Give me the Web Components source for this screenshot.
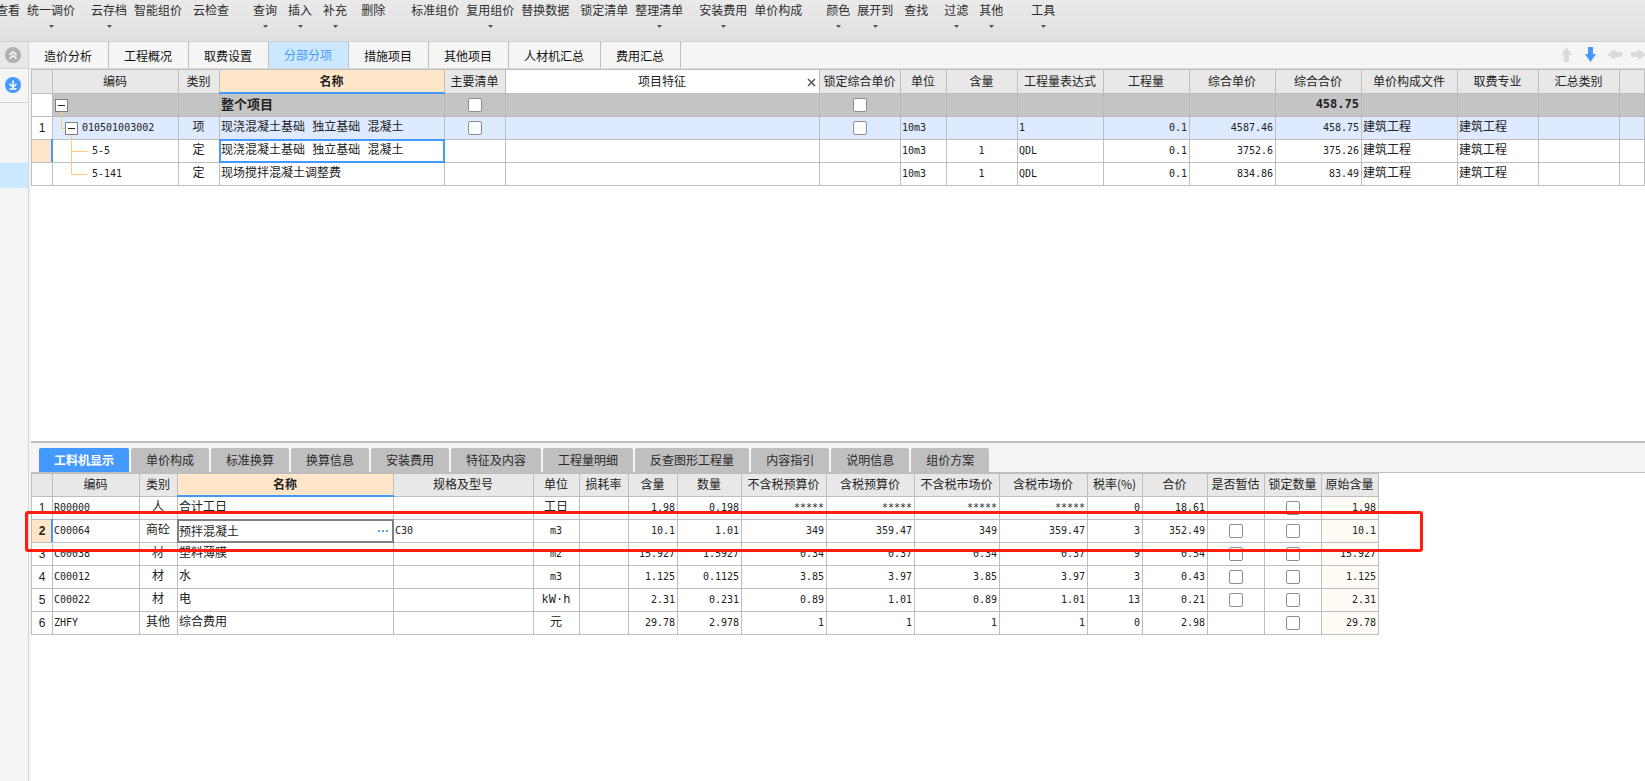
<!DOCTYPE html>
<html lang="zh-CN">
<head>
<meta charset="utf-8">
<title>分部分项 - 计价编辑</title>
<style>
  html, body { margin: 0; height: 100%; }
  body {
    overflow: hidden;
    font: 12px/16px "Noto Sans CJK SC", sans-serif;
    color: #222;
    background: #fff;
    --line: #bebebe;
    --bar: #f5f5f5;
    --head: #e8e8e8;
    --accent: #4499ff;
    --warm: #ffe6c8;
    --pale: #cce8ff;
  }
</style>
</head>
<body>
<pricing-app></pricing-app>

<script>
const make = (name, html, setup) => {
  const template = document.createElement('template');
  template.innerHTML = html;
  customElements.define(name, class extends HTMLElement {
    connectedCallback() {
      if (this.shadowRoot) return;
      const root = this.attachShadow({ mode: 'open' });
      root.append(template.content.cloneNode(true));
      if (setup) setup(this, root);
    }
  });
};

/* One command of the ribbon; "menu" adds the drop-down mark. */
make('tool-command', `
  <style>
    :host { display: block; flex: none; margin-right: var(--after, 7px); }
    button { display: flex; flex-direction: column; align-items: center; gap: 7px; height: 32px;
      padding: 2px 0 0; border: 0; background: none; font: inherit; color: #2e2e2e; white-space: nowrap; }
    svg { display: none; width: 5px; height: 3px; fill: #555; }
    :host([menu]) svg { display: block; }
  </style>
  <button type="button"><slot></slot><svg viewBox="0 0 5 3" aria-hidden="true"><path d="M0 0h5L2.5 3z"/></svg></button>`);

make('tool-ribbon', `
  <style>
    :host { display: block; height: 41px; overflow: hidden; border-bottom: 1px solid #d0d0d0;
      background: linear-gradient(#eaeaea, #e0e0e0); }
    div { display: flex; margin-left: -4px; }
  </style>
  <div role="toolbar" aria-label="功能区"><slot></slot></div>`);

make('side-rail', `
  <style>
    :host { display: flex; flex-direction: column; width: 28px; flex: none; border-right: 1px solid #d5d5d5; background: var(--bar); }
    button { display: grid; place-items: center; width: 100%; padding: 0 2px 0 0; border: 0; background: none; box-sizing: border-box; }
    .up { height: 27px; background: var(--head); border-bottom: 1px solid #d5d5d5; }
    .down { height: 34px; padding-bottom: 1px; border-bottom: 1px solid #d5d5d5; }
    .mark { height: 25px; margin-top: 60px; background: var(--pale); }
    svg { width: 16px; height: 16px; }
    path { fill: none; stroke: #fff; stroke-width: 1.5; }
  </style>
  <button class="up" type="button" aria-label="收起"><svg viewBox="0 0 16 16"><circle cx="8" cy="8" r="8" fill="#b0b0b0"/><path d="M4.500 8 8 4.700 11.500 8M4.500 11.800 8 8.500 11.500 11.800"/></svg></button>
  <button class="down" type="button" aria-label="下载"><svg viewBox="0 0 16 16"><circle cx="8" cy="8" r="8" fill="#4499ff"/><path d="M8 3.500V10M4.500 6.800 8 10.200 11.500 6.800M4.500 12h7"/></svg></button>
  <div class="mark"></div>`);

make('page-tab', `
  <style>
    :host { display: block; flex: none; border-right: 1px solid var(--line); }
    button { display: block; height: 26px; padding: 2px 16px 0 15px; border: 0; background: none; font: inherit; color: #111; white-space: nowrap; }
    :host([current]) button { background: var(--pale); color: var(--accent); padding-top: 0; }
  </style>
  <button type="button" role="tab"><slot></slot></button>`);

make('page-tabs', `
  <style>
    :host { display: flex; height: 26px; border-bottom: 1px solid #d8d8d8; background: var(--bar); overflow: hidden; }
    .tabs { display: flex; flex: 1; }
    .moves { display: flex; align-items: center; gap: 9px; margin-right: -1px; height: 24px; }
    .moves button { display: block; padding: 0; border: 0; background: none; fill: #dadada; }
    .moves .on { fill: var(--accent); }
    svg { display: block; width: 15px; height: 15px; }
  </style>
  <div class="tabs" role="tablist"><slot></slot></div>
  <div class="moves">
    <button type="button" aria-label="上移"><svg viewBox="0 0 15 15"><path d="M7.500 0 13 8H10v7H5V8H2z"/></svg></button>
    <button type="button" class="on" aria-label="下移"><svg viewBox="0 0 15 15"><path d="M7.500 15 13 7H10V0H5v7H2z"/></svg></button>
    <button type="button" aria-label="左移"><svg viewBox="0 0 15 15"><path d="M0 7.500 8 2v3h7v5H8v3z"/></svg></button>
    <button type="button" aria-label="右移"><svg viewBox="0 0 15 15"><path d="M15 7.500 7 2v3H0v5h7v3z"/></svg></button>
  </div>`);

make('detail-tab', `
  <style>
    :host { display: block; flex: none; }
    button { display: block; height: 24px; padding: 0 15px; border: 0; border-radius: 2px 2px 0 0; background: #bfbfbf; font: inherit; color: #2a2a2a; white-space: nowrap; }
    :host([current]) button { background: var(--accent); color: #fff; font-weight: 700; }
  </style>
  <button type="button" role="tab"><slot></slot></button>`);

make('detail-tabs', `
  <style>
    :host { display: flex; gap: 2px; height: 24px; padding: 5px 0 0 8px; border-top: 2px solid var(--line); border-bottom: 1px solid var(--line); background: var(--bar); }
  </style>
  <slot></slot>`);

make('tick-box', `
  <style>
    :host { display: block; height: 14px; }
    input { appearance: none; display: block; box-sizing: border-box; width: 14px; height: 14px; margin: 0 auto; border: 1px solid #8e8e8e; border-radius: 2px; background: #fff; }
  </style>
  <input type="checkbox">`, (host, root) => {
    root.querySelector('input').setAttribute('aria-label', host.getAttribute('label') || '');
  });

/* Outline cell: connector lines, an optional collapse button, then the code. */
make('tree-node', `
  <style>
    :host { display: flex; align-items: center; position: relative; height: 22px; }
    svg { position: absolute; left: 0; top: 0; width: 40px; height: 23px; fill: none; stroke: #ffc87c; }
    button { position: relative; width: 13px; height: 13px; padding: 0; border: 1px solid #808080; background: #fff; flex: none; }
    button::before { content: ""; display: block; width: 7px; height: 1px; margin: auto; background: #222; }
    :host([level="0"]) { padding-left: 2px; }
    :host([level="1"]) { padding-left: 12px; gap: 4px; }
    :host([level="2"]) { padding-left: 39px; }
    :host([level="2"]) button { display: none; }
  </style>
  <svg viewBox="0 0 40 23" aria-hidden="true"><path/></svg><button type="button" aria-label="折叠"></button><slot></slot>`,
  (host, root) => {
    const shapes = { start: 'M8.5 17v6', middle: 'M8.5 0v11.500h4M18.500 17v6', branch: 'M18.500 0v23M18.500 11.500h16', end: 'M18.500 0v11.500h16' };
    root.querySelector('path').setAttribute('d', shapes[host.getAttribute('lines')]);
  });

make('edit-field', `
  <style>
    :host { display: flex; align-items: center; height: 22px; }
    input { flex: 1; min-width: 0; height: 18px; padding: 0 0 0 1px; border: 0; outline: 0; background: none; font: inherit; color: inherit; }
    button { padding: 0 4px; border: 0; background: none; }
    svg { display: block; width: 11px; height: 2px; fill: #5aa5dc; }
  </style>
  <input type="text" aria-label="名称"><button type="button" aria-label="更多"><svg viewBox="0 0 11 2"><path d="M0 0h2v2H0zM4 0h2v2H4zM8 0h2v2H8z"/></svg></button>`,
  (host, root) => { root.querySelector('input').value = host.getAttribute('value'); });

/* Sheets are described by columns [title, width, align, role] and rows of cell texts. */
const num = /^[\x21-\x7e]+$/;
const sheet = (name, { columns, rows, fill, current }) => make(name, `
  <style>
    :host { display: block; border-top: 1px solid var(--line); }
    table { table-layout: fixed; border-collapse: separate; border-spacing: 0; width: ${fill ? '100%' : columns.reduce((s, c) => s + c[1], 0) + 'px'}; }
    th, td { position: relative; box-sizing: border-box; height: 23px; padding: 0 2px 0 1px; border: 0 solid var(--line); border-width: 0 1px 1px 0; overflow: visible; white-space: nowrap; font-weight: 400; line-height: 16px; text-align: left; background: #fff; }
    th:first-child, td:first-child { border-left-width: 1px; text-align: center; padding: 0; }
    thead th { padding: 0 1px 2px 0; text-align: center; background: var(--head); height: var(--head-height, 24px); }
    thead th.focus { background: var(--warm); font-weight: 700; }
    thead th.focus::after { content: ""; position: absolute; left: -1px; right: -1px; bottom: -1px; height: 2px; background: var(--accent); z-index: 1; }
    thead th.open { background: #fff; }
    thead button { position: absolute; right: 3px; top: 8px; padding: 0; border: 0; background: none; }
    thead svg { display: block; width: 9px; height: 9px; stroke: #555; stroke-width: 1.500; }
    tbody th { font-family: "Liberation Sans", sans-serif; }
    tbody th.here { background: var(--warm); font-weight: 700; }
    tbody th.here::after { content: ""; position: absolute; right: -1px; top: -1px; bottom: 0; width: 2px; background: var(--accent); }
    td { font-family: "Liberation Mono", "Noto Sans CJK SC", monospace; }
    td.latin { font-family: "DejaVu Sans Mono", monospace; font-size: 10px; padding-bottom: 1px; }
    .right { text-align: right; }
    .mid { text-align: center; }
    td.tree { padding: 0; }
    tr.total td { background: #c4c4c4; border-color: #bababa; font: 700 13px/16px "Noto Sans CJK SC", sans-serif; padding-bottom: 2px; }
    tr.total td.mid { padding-bottom: 0; }
    tr.total td.tree { padding: 0; }
    tr.total td.latin { font-family: "DejaVu Sans Mono", monospace; font-size: 12px; }
    tr.item td { background: #deeaff; }
    td.pick::after { content: ""; position: absolute; inset: -1px; border: 2px solid var(--pick); pointer-events: none; }
    td.cream { background: #fffbf5; }
  </style>
  <table>
    <colgroup>${columns.map(c => `<col${c[1] ? ` style="width:${c[1]}px"` : ''}>`).join('')}</colgroup>
    <thead><tr>${columns.map(c => `<th scope="col" class="${c[3] || ''}">${c[0]}${c[3] === 'open' ? '<button type="button" aria-label="关闭"><svg viewBox="0 0 9 9"><path d="M1 1l7 7M8 1L1 8"/></svg></button>' : ''}</th>`).join('')}</tr></thead>
    <tbody>${rows.map((row, r) => `<tr class="${row.kind || ''}">${row.cells.map((text, i) => {
      if (i === 0) return `<th scope="row" class="${r === current ? 'here' : ''}">${text}</th>`;
      const col = columns[i];
      const cls = [col[2] || ''];
      let body = text;
      if (text === '[]') body = `<tick-box label="${col[0]}"></tick-box>`;
      else if (num.test(text)) cls.push('latin');
      if (row.tree && i === 1) { cls.push('tree', 'latin'); body = `<tree-node level="${row.tree[0]}" lines="${row.tree[1]}">${text}</tree-node>`; }
      if (r === current && col[3] === 'focus') { cls.push('pick'); if (!fill) { cls.push('tree'); body = `<edit-field value="${text}"></edit-field>`; } }
      if (col[3] === 'last') cls.push('cream');
      return `<td class="${cls.join(' ')}">${body}</td>`;
    }).join('')}</tr>`).join('')}</tbody>
  </table>`);

sheet('bill-sheet', {
  fill: true, current: 2,
  columns: [['', 22], ['编码', 126], ['类别', 41, 'mid'], ['名称', 225, '', 'focus'], ['主要清单', 61, 'mid'], ['项目特征', 314, '', 'open'],
    ['锁定综合单价', 81, 'mid'], ['单位', 46], ['含量', 71, 'mid'], ['工程量表达式', 86], ['工程量', 86, 'right'], ['综合单价', 86, 'right'],
    ['综合合价', 86, 'right'], ['单价构成文件', 96], ['取费专业', 81], ['汇总类别', 81], ['', 0]],
  rows: [
    { kind: 'total', tree: [0, 'start'], cells: ['', '', '', '整个项目', '[]', '', '[]', '', '', '', '', '', '458.75', '', '', '', ''] },
    { kind: 'item', tree: [1, 'middle'], cells: ['1', '010501003002', '项', '现浇混凝土基础 独立基础 混凝土', '[]', '', '[]', '10m3', '', '1', '0.1', '4587.46', '458.75', '建筑工程', '建筑工程', '', ''] },
    { tree: [2, 'branch'], cells: ['', '5-5', '定', '现浇混凝土基础 独立基础 混凝土', '', '', '', '10m3', '1', 'QDL', '0.1', '3752.6', '375.26', '建筑工程', '建筑工程', '', ''] },
    { tree: [2, 'end'], cells: ['', '5-141', '定', '现场搅拌混凝土调整费', '', '', '', '10m3', '1', 'QDL', '0.1', '834.86', '83.49', '建筑工程', '建筑工程', '', ''] }
  ]
});

sheet('resource-sheet', {
  current: 1,
  columns: [['', 22], ['编码', 87], ['类别', 38, 'mid'], ['名称', 216, '', 'focus'], ['规格及型号', 140], ['单位', 46, 'mid'], ['损耗率', 49],
    ['含量', 49, 'right'], ['数量', 64, 'right'], ['不含税预算价', 85, 'right'], ['含税预算价', 88, 'right'], ['不含税市场价', 85, 'right'],
    ['含税市场价', 88, 'right'], ['税率(%)', 55, 'right'], ['合价', 65, 'right'], ['是否暂估', 57, 'mid'], ['锁定数量', 57, 'mid'], ['原始含量', 57, 'right', 'last']],
  rows: [
    ['1', 'R00000', '人', '合计工日', '', '工日', '', '1.98', '0.198', '*****', '*****', '*****', '*****', '0', '18.61', '', '[]', '1.98'],
    ['2', 'C00064', '商砼', '预拌混凝土', 'C30', 'm3', '', '10.1', '1.01', '349', '359.47', '349', '359.47', '3', '352.49', '[]', '[]', '10.1'],
    ['3', 'C00038', '材', '塑料薄膜', '', 'm2', '', '15.927', '1.5927', '0.34', '0.37', '0.34', '0.37', '9', '0.54', '[]', '[]', '15.927'],
    ['4', 'C00012', '材', '水', '', 'm3', '', '1.125', '0.1125', '3.85', '3.97', '3.85', '3.97', '3', '0.43', '[]', '[]', '1.125'],
    ['5', 'C00022', '材', '电', '', 'kW·h', '', '2.31', '0.231', '0.89', '1.01', '0.89', '1.01', '13', '0.21', '[]', '[]', '2.31'],
    ['6', 'ZHFY', '其他', '综合费用', '', '元', '', '29.78', '2.978', '1', '1', '1', '1', '0', '2.98', '', '[]', '29.78']
  ].map(cells => ({ cells }))
});

make('pricing-app', `
  <style>
    :host { display: flex; flex-direction: column; height: 100vh; overflow: hidden; }
    .body { display: flex; flex: 1; min-height: 0; }
    main { display: flex; flex-direction: column; flex: 1; min-width: 0; }
    page-tabs { flex: none; }
    .panes { display: flex; flex-direction: column; flex: 1; min-height: 0; border-left: 2px solid var(--bar); }
    section { position: relative; flex: 372 1 0; min-height: 0; }
    section.detail { flex-grow: 340; }
    bill-sheet { --pick: var(--accent); }
    resource-sheet { width: max-content; --head-height: 23px; --pick: #808080; }
    .callout { position: absolute; left: -6px; top: 70px; width: 1398px; height: 41px; box-sizing: border-box; border: 3px solid #ff1e10; border-radius: 3px; pointer-events: none; z-index: 2; }
    .medium { --after: 11px; } .wide { --after: 14px; } .large { --after: 16px; } .group { --after: 24px; } .far { --after: 26px; } .last { --after: 28px; }
  </style>
  <tool-ribbon>
    <tool-command>查看</tool-command><tool-command menu class="large">统一调价</tool-command>
    <tool-command menu>云存档</tool-command><tool-command class="medium">智能组价</tool-command><tool-command class="group">云检查</tool-command>
    <tool-command menu class="medium">查询</tool-command><tool-command menu class="medium">插入</tool-command><tool-command menu class="wide">补充</tool-command><tool-command class="far">删除</tool-command>
    <tool-command>标准组价</tool-command><tool-command menu>复用组价</tool-command><tool-command class="medium">替换数据</tool-command><tool-command>锁定清单</tool-command><tool-command menu class="large">整理清单</tool-command>
    <tool-command menu>安装费用</tool-command><tool-command class="group">单价构成</tool-command>
    <tool-command menu>颜色</tool-command><tool-command menu class="medium">展开到</tool-command><tool-command class="large">查找</tool-command><tool-command menu class="medium">过滤</tool-command><tool-command menu class="last">其他</tool-command>
    <tool-command menu>工具</tool-command>
  </tool-ribbon>
  <div class="body">
    <side-rail></side-rail>
    <main>
      <page-tabs>
        <page-tab>造价分析</page-tab><page-tab>工程概况</page-tab><page-tab>取费设置</page-tab><page-tab current>分部分项</page-tab><page-tab>措施项目</page-tab><page-tab>其他项目</page-tab><page-tab>人材机汇总</page-tab><page-tab>费用汇总</page-tab>
      </page-tabs>
      <div class="panes">
        <section><bill-sheet></bill-sheet></section>
        <section class="detail">
          <detail-tabs role="tablist">
            <detail-tab current>工料机显示</detail-tab><detail-tab>单价构成</detail-tab><detail-tab>标准换算</detail-tab><detail-tab>换算信息</detail-tab><detail-tab>安装费用</detail-tab><detail-tab>特征及内容</detail-tab><detail-tab>工程量明细</detail-tab><detail-tab>反查图形工程量</detail-tab><detail-tab>内容指引</detail-tab><detail-tab>说明信息</detail-tab><detail-tab>组价方案</detail-tab>
          </detail-tabs>
          <resource-sheet></resource-sheet>
          <div class="callout"></div>
        </section>
      </div>
    </main>
  </div>`);
</script>
</body>
</html>
